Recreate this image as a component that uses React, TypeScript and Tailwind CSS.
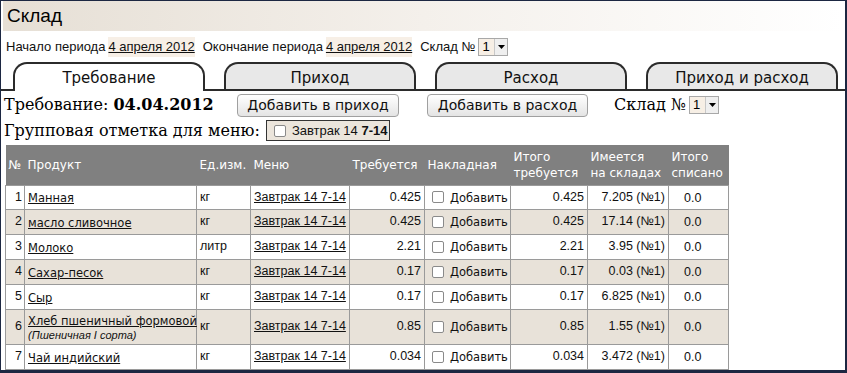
import React from 'react';

const sans = "font-['Liberation_Sans',Arial,sans-serif]";
const deja = "font-['DejaVu_Sans',sans-serif]";
const serif = "font-['DejaVu_Serif',serif]";

interface Row {
  n: number;
  product: string;
  note?: string;
  unit: string;
  need: string;
  total: string;
  stock: string;
}

const ROWS: Row[] = [
  { n: 1, product: 'Манная', unit: 'кг', need: '0.425', total: '0.425', stock: '7.205 (№1)' },
  { n: 2, product: 'масло сливочное', unit: 'кг', need: '0.425', total: '0.425', stock: '17.14 (№1)' },
  { n: 3, product: 'Молоко', unit: 'литр', need: '2.21', total: '2.21', stock: '3.95 (№1)' },
  { n: 4, product: 'Сахар-песок', unit: 'кг', need: '0.17', total: '0.17', stock: '0.03 (№1)' },
  { n: 5, product: 'Сыр', unit: 'кг', need: '0.17', total: '0.17', stock: '6.825 (№1)' },
  { n: 6, product: 'Хлеб пшеничный формовой', note: '(Пшеничная I сорта)', unit: 'кг', need: '0.85', total: '0.85', stock: '1.55 (№1)' },
  { n: 7, product: 'Чай индийский', unit: 'кг', need: '0.034', total: '0.034', stock: '3.472 (№1)' },
];

const TABS = ['Требование', 'Приход', 'Расход', 'Приход и расход'];

const Check = () => (
  <span className="inline-block w-[12px] h-[12px] border border-[#8a8a8a] bg-white rounded-[2px] shrink-0" />
);

const Select = () => (
  <span className="inline-flex h-[18px] w-[30px] border border-[#a8a8a8] bg-white items-stretch">
    <span className={`${sans} text-[13px] leading-[16px] bg-[#f7efe5] flex-1 pl-[3px] text-black`}>1</span>
    <span className="w-[13px] bg-[#efefef] border-l border-[#c8c8c8] flex items-center justify-center">
      <svg width="7" height="4" viewBox="0 0 7 4"><path d="M0 0h7L3.5 4z" fill="#000" /></svg>
    </span>
  </span>
);

const Button = ({ label, w }: { label: string; w: string }) => (
  <button
    className={`${deja} ${w} h-[23px] text-[14px] text-[#111] rounded-[4px] border border-[#a0a0a0] bg-gradient-to-b from-white to-[#e4e4e4] flex items-center justify-center`}
  >
    {label}
  </button>
);

const cell = 'border border-[#9a9a9a] whitespace-nowrap';

const App: React.FC = () => {
  return (
    <div className="w-[847px] h-[373px] overflow-hidden bg-white border-l border-t border-r-2 border-b-[3px] border-[#1c2742]">
      {/* title */}
      <div className="mx-[2px] h-[30px] flex items-center px-[4px] bg-gradient-to-r from-[#e6dfd5] via-[#f4f0eb] to-white">
        <span className={`${sans} text-[19px] text-black`}>Склад</span>
      </div>

      {/* period */}
      <div className={`${sans} mt-[6px] h-[20px] flex items-center pl-[5px] text-[13px] text-[#111] whitespace-nowrap`}>
        <span>Начало периода</span>
        <a className="ml-[3px] underline bg-[#f7efe6]">4 апреля 2012</a>
        <span className="ml-[8px]">Окончание периода</span>
        <a className="ml-[3px] underline bg-[#f7efe6]">4 апреля 2012</a>
        <span className="ml-[8px]">Склад №</span>
        <span className="ml-[3px] flex"><Select /></span>
      </div>

      {/* tabs */}
      <div className="mt-[7px] h-[27px] flex items-end border-b-2 border-[#2b2b2b] pl-[12px] gap-[19px]">
        {TABS.map((t, i) => (
          <div
            key={t}
            className={`${deja} w-[192px] border-2 border-b-0 border-[#2b2b2b] rounded-t-[14px] flex items-center justify-center pt-[3px] text-[15px] text-[#111] ${
              i === 0 ? 'bg-white h-[29px] -mb-[2px] pb-[2px]' : 'bg-[#e8e8e8] h-[27px]'
            }`}
          >
            {t}
          </div>
        ))}
      </div>

      {/* heading row */}
      <div className="h-[27px] flex items-center pl-[3px] pt-[1px] whitespace-nowrap">
        <span className={`${serif} text-[16px] text-black w-[205px]`}>
          Требование: <b>04.04.2012</b>
        </span>
        <span className="ml-[28px]"><Button label="Добавить в приход" w="w-[162px]" /></span>
        <span className="ml-[28px]"><Button label="Добавить в расход" w="w-[161px]" /></span>
        <span className={`${serif} text-[16px] text-black ml-[26px]`}>Склад №</span>
        <span className="ml-[3px] flex"><Select /></span>
      </div>

      {/* group mark row */}
      <div className="h-[25px] flex items-center pl-[3px] whitespace-nowrap">
        <span className={`${serif} text-[16px] text-black`}>Групповая отметка для меню:</span>
        <span className={`${sans} ml-[6px] h-[21px] w-[124px] border border-[#333] bg-[#ebe5dc] flex items-center pl-[7px] text-[13px] text-[#111]`}>
          <Check />
          <span className="ml-[6px]">Завтрак 14 <b>7-14</b></span>
        </span>
      </div>

      {/* table */}
      <table className="ml-[4px] mt-[2px] border-collapse table-fixed w-[723px] text-[#111]">
        <colgroup>
          <col className="w-[19px]" />
          <col className="w-[172px]" />
          <col className="w-[54px]" />
          <col className="w-[99px]" />
          <col className="w-[75px]" />
          <col className="w-[86px]" />
          <col className="w-[77px]" />
          <col className="w-[81px]" />
          <col className="w-[60px]" />
        </colgroup>
        <thead>
          <tr className={`${deja} h-[40px] bg-[#808080] text-white text-[12px] leading-[16px] text-left whitespace-nowrap`}>
            <th className="font-normal pl-[3px]">№</th>
            <th className="font-normal pl-[3px]">Продукт</th>
            <th className="font-normal pl-[3px]">Ед.изм.</th>
            <th className="font-normal pl-[3px]">Меню</th>
            <th className="font-normal pl-[3px]">Требуется</th>
            <th className="font-normal pl-[3px]">Накладная</th>
            <th className="font-normal pl-[3px]">Итого<br />требуется</th>
            <th className="font-normal pl-[3px]">Имеется<br />на складах</th>
            <th className="font-normal pl-[3px]">Итого<br />списано</th>
          </tr>
        </thead>
        <tbody>
          {ROWS.map((r, i) => (
            <tr
              key={r.n}
              className={`${r.note ? 'h-[35px]' : i === 0 ? 'h-[24px]' : 'h-[25px]'} ${i % 2 === 1 ? 'bg-[#e8e2d9]' : 'bg-white'}`}
            >
              <td className={`${sans} ${cell} text-[12.5px] text-right pr-[2px]`}>{r.n}</td>
              <td className={`${cell} pl-[3px] leading-[14px]`}>
                <a className={`${deja} text-[11.5px] underline`}>{r.product}</a>
                {r.note && (
                  <div className={`${sans} italic text-[11px] leading-[14px]`}>{r.note}</div>
                )}
              </td>
              <td className={`${sans} ${cell} pl-[3px] text-[12.5px]`}>{r.unit}</td>
              <td className={`${sans} ${cell} pl-[3px] text-[12.5px]`}>
                <a className="underline">Завтрак 14 7-14</a>
              </td>
              <td className={`${sans} ${cell} pr-[3px] text-right text-[12.5px]`}>{r.need}</td>
              <td className={`${cell} pl-[7px]`}>
                <span className="flex items-center">
                  <Check />
                  <span className={`${deja} ml-[6px] text-[11.5px] pt-[3px]`}>Добавить</span>
                </span>
              </td>
              <td className={`${sans} ${cell} pr-[3px] text-right text-[12.5px]`}>{r.total}</td>
              <td className={`${sans} ${cell} pr-[3px] text-right text-[12.5px]`}>{r.stock}</td>
              <td className={`${sans} ${cell} pl-[15px] text-[12.5px] pt-[2px]`}>0.0</td>
            </tr>
          ))}
        </tbody>
      </table>
    </div>
  );
};

export default App;
